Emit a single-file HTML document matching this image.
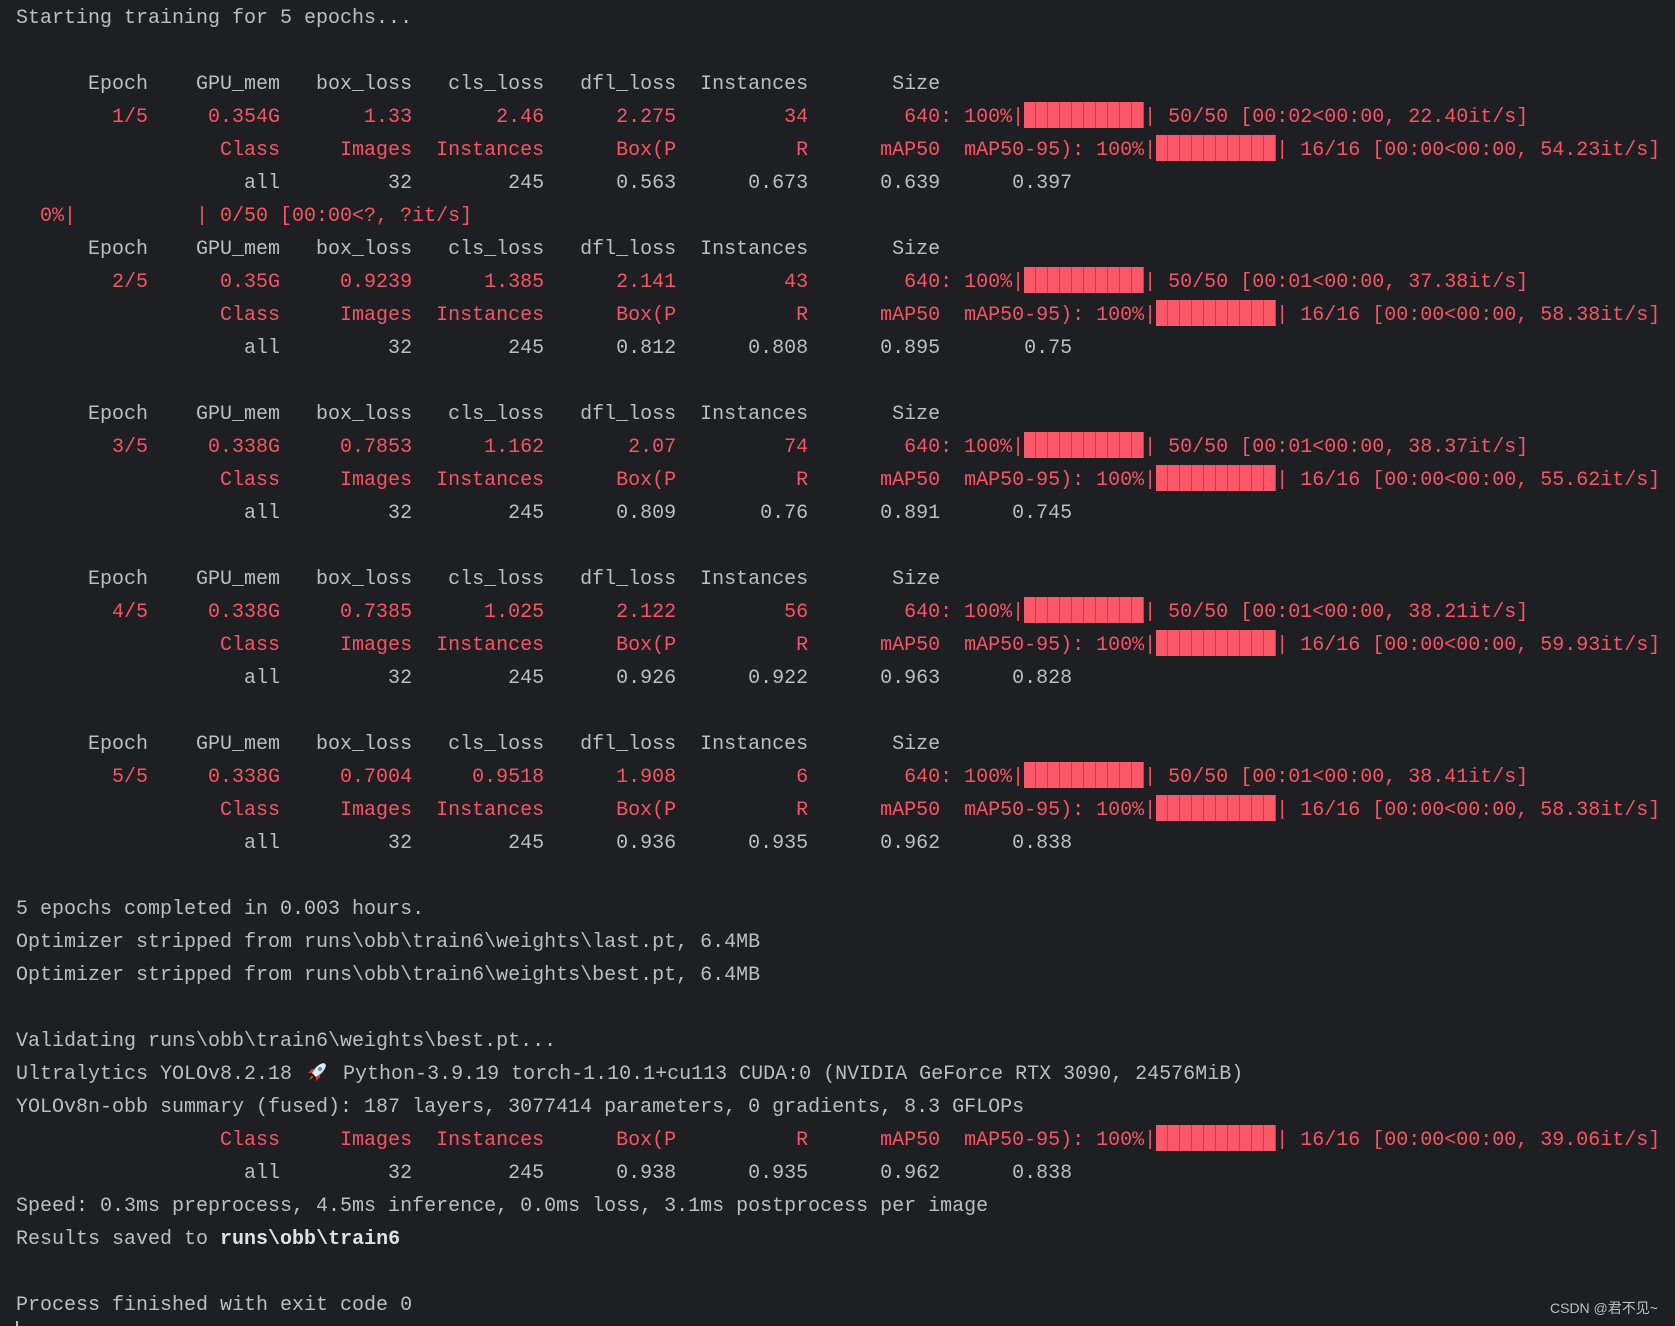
<!DOCTYPE html>
<html><head><meta charset="utf-8"><style>
html,body{margin:0;padding:0;background:#1e1f22;width:1675px;height:1326px;overflow:hidden}
pre{position:absolute;left:16px;top:1.5px;margin:0;font-family:"Liberation Mono",monospace;font-size:20px;line-height:33px;color:#bcbec4;white-space:pre}
.r{color:#f75464}
.b{display:inline-block;width:120px;height:26px;vertical-align:-6px;background:repeating-linear-gradient(90deg,#fa5868 0,#fa5868 11px,#c9404b 11px,#c9404b 12px)}
.k{font-weight:bold;color:#dfe1e5}
.rk{display:inline-block;width:27px;height:24px;vertical-align:-5px}
.wm{position:absolute;left:1550px;top:1298px;font-family:"Liberation Sans","Noto Sans CJK SC",sans-serif;font-size:14px;color:#bcbec4}
.cur{position:absolute;left:16px;top:1321px;width:2px;height:5px;background:#bcbec4}
</style></head><body>
<pre>Starting training for 5 epochs...

      Epoch    GPU_mem   box_loss   cls_loss   dfl_loss  Instances       Size
<span class="r">        1/5     0.354G       1.33       2.46      2.275         34        640: 100%|<span class="b"></span>| 50/50 [00:02&lt;00:00, 22.40it/s]</span>
<span class="r">                 Class     Images  Instances      Box(P          R      mAP50  mAP50-95): 100%|<span class="b"></span>| 16/16 [00:00&lt;00:00, 54.23it/s]</span>
                   all         32        245      0.563      0.673      0.639      0.397
<span class="r">  0%|          | 0/50 [00:00&lt;?, ?it/s]</span>
      Epoch    GPU_mem   box_loss   cls_loss   dfl_loss  Instances       Size
<span class="r">        2/5      0.35G     0.9239      1.385      2.141         43        640: 100%|<span class="b"></span>| 50/50 [00:01&lt;00:00, 37.38it/s]</span>
<span class="r">                 Class     Images  Instances      Box(P          R      mAP50  mAP50-95): 100%|<span class="b"></span>| 16/16 [00:00&lt;00:00, 58.38it/s]</span>
                   all         32        245      0.812      0.808      0.895       0.75

      Epoch    GPU_mem   box_loss   cls_loss   dfl_loss  Instances       Size
<span class="r">        3/5     0.338G     0.7853      1.162       2.07         74        640: 100%|<span class="b"></span>| 50/50 [00:01&lt;00:00, 38.37it/s]</span>
<span class="r">                 Class     Images  Instances      Box(P          R      mAP50  mAP50-95): 100%|<span class="b"></span>| 16/16 [00:00&lt;00:00, 55.62it/s]</span>
                   all         32        245      0.809       0.76      0.891      0.745

      Epoch    GPU_mem   box_loss   cls_loss   dfl_loss  Instances       Size
<span class="r">        4/5     0.338G     0.7385      1.025      2.122         56        640: 100%|<span class="b"></span>| 50/50 [00:01&lt;00:00, 38.21it/s]</span>
<span class="r">                 Class     Images  Instances      Box(P          R      mAP50  mAP50-95): 100%|<span class="b"></span>| 16/16 [00:00&lt;00:00, 59.93it/s]</span>
                   all         32        245      0.926      0.922      0.963      0.828

      Epoch    GPU_mem   box_loss   cls_loss   dfl_loss  Instances       Size
<span class="r">        5/5     0.338G     0.7004     0.9518      1.908          6        640: 100%|<span class="b"></span>| 50/50 [00:01&lt;00:00, 38.41it/s]</span>
<span class="r">                 Class     Images  Instances      Box(P          R      mAP50  mAP50-95): 100%|<span class="b"></span>| 16/16 [00:00&lt;00:00, 58.38it/s]</span>
                   all         32        245      0.936      0.935      0.962      0.838

5 epochs completed in 0.003 hours.
Optimizer stripped from runs\obb\train6\weights\last.pt, 6.4MB
Optimizer stripped from runs\obb\train6\weights\best.pt, 6.4MB

Validating runs\obb\train6\weights\best.pt...
Ultralytics YOLOv8.2.18 <svg class="rk" viewBox="0 0 27 24"><path d="M20 3 C14 4 10 9 8 13 L12 17 C16 15 21 11 22 5 Z" fill="#e8eaf0"/><circle cx="16" cy="9" r="2" fill="#4a90d9"/><path d="M8 13 L4 13 L8 9 L11 9 Z M12 17 L12 21 L16 17 L16 14 Z" fill="#d83a3a"/><path d="M8 16 L5 20 L9 17 Z" fill="#f5a623"/></svg> Python-3.9.19 torch-1.10.1+cu113 CUDA:0 (NVIDIA GeForce RTX 3090, 24576MiB)
YOLOv8n-obb summary (fused): 187 layers, 3077414 parameters, 0 gradients, 8.3 GFLOPs
<span class="r">                 Class     Images  Instances      Box(P          R      mAP50  mAP50-95): 100%|<span class="b"></span>| 16/16 [00:00&lt;00:00, 39.06it/s]</span>
                   all         32        245      0.938      0.935      0.962      0.838
Speed: 0.3ms preprocess, 4.5ms inference, 0.0ms loss, 3.1ms postprocess per image
Results saved to <span class="k">runs\obb\train6</span>

Process finished with exit code 0</pre>
<div class="cur"></div>
<div class="wm">CSDN @君不见~</div>
</body></html>
